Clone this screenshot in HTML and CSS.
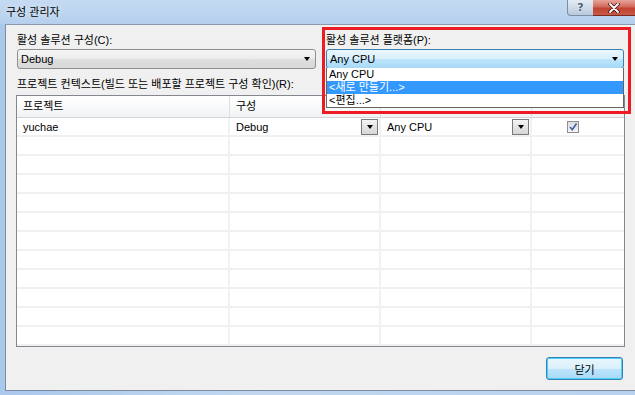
FILE: index.html
```html
<!DOCTYPE html>
<html lang="ko">
<head>
<meta charset="utf-8">
<link rel="stylesheet" href="styles.css">
</head>
<body>
<div class="window">
  <div class="titlebar">
    <div class="title">구성 관리자</div>
    <div class="caption-btns">
      <div class="cbtn help">?</div>
      <div class="cbtn close">
        <svg width="16" height="10" viewBox="0 0 16 10"><path d="M4 1 L12 9 M12 1 L4 9" stroke="#3b1010" stroke-width="3.4" stroke-linecap="round"/><path d="M4 1 L12 9 M12 1 L4 9" stroke="#ffffff" stroke-width="1.8" stroke-linecap="round"/></svg>
      </div>
    </div>
  </div>
  <div class="client">
    <div class="fields">
      <div class="field">
        <div class="label">활성 솔루션 구성(C):</div>
        <div class="combo">
          <span>Debug</span>
          <span class="arrow"></span>
        </div>
      </div>
      <div class="field platform">
        <div class="label">활성 솔루션 플랫폼(P):</div>
        <div class="combo active">
          <span>Any CPU</span>
          <span class="arrow"></span>
        </div>
        <div class="droplist">
          <div class="item">Any CPU</div>
          <div class="item selected">&lt;새로 만들기...&gt;</div>
          <div class="item">&lt;편집...&gt;</div>
        </div>
        <div class="highlight"></div>
      </div>
    </div>
    <div class="label grid-label">프로젝트 컨텍스트(빌드 또는 배포할 프로젝트 구성 확인)(R):</div>
    <div class="grid">
      <div class="hcell">프로젝트</div>
      <div class="hcell">구성</div>
      <div class="hcell"></div>
      <div class="hcell"></div>

      <div class="cell">yuchae</div>
      <div class="cell drop"><span>Debug</span><span class="cellbtn"><span class="arrow"></span></span></div>
      <div class="cell drop"><span>Any CPU</span><span class="cellbtn"><span class="arrow"></span></span></div>
      <div class="cell center"><span class="check"><svg width="10" height="10" viewBox="0 0 10 10"><path d="M2 5 L4.3 7.6 L8.5 1.5" stroke="#3f5ea8" stroke-width="1.6" fill="none"/></svg></span></div>

      <div class="cell"></div><div class="cell"></div><div class="cell"></div><div class="cell"></div>
      <div class="cell"></div><div class="cell"></div><div class="cell"></div><div class="cell"></div>
      <div class="cell"></div><div class="cell"></div><div class="cell"></div><div class="cell"></div>
      <div class="cell"></div><div class="cell"></div><div class="cell"></div><div class="cell"></div>
      <div class="cell"></div><div class="cell"></div><div class="cell"></div><div class="cell"></div>
      <div class="cell"></div><div class="cell"></div><div class="cell"></div><div class="cell"></div>
      <div class="cell"></div><div class="cell"></div><div class="cell"></div><div class="cell"></div>
      <div class="cell"></div><div class="cell"></div><div class="cell"></div><div class="cell"></div>
      <div class="cell"></div><div class="cell"></div><div class="cell"></div><div class="cell"></div>
      <div class="cell"></div><div class="cell"></div><div class="cell"></div><div class="cell"></div>
      <div class="cell"></div><div class="cell"></div><div class="cell"></div><div class="cell"></div>
    </div>
    <div class="footer">
      <button class="btn">닫기</button>
    </div>
  </div>
</div>
</body>
</html>
```

FILE: styles.css
```css
* { box-sizing: border-box; }
html, body { margin: 0; padding: 0; }
body {
  width: 635px;
  height: 395px;
  overflow: hidden;
  font-family: "Liberation Sans", "Noto Sans CJK KR", sans-serif;
  font-size: 11px;
  color: #000;
}
.window {
  width: 635px;
  height: 395px;
  background: linear-gradient(90deg, #a9c8ec 0%, #c2d8f0 40%, #b8d1ee 100%);
  display: flex;
  flex-direction: column;
}
.titlebar {
  height: 24px;
  flex: none;
  position: relative;
  background: linear-gradient(180deg, #c5dbf2 0%, #bcd4ef 60%, #b5cfec 100%);
}
.title {
  position: absolute;
  left: 6px;
  top: 5px;
  line-height: 14px;
  font-size: 11px;
  color: #000;
  text-shadow: 0 0 6px rgba(255,255,255,0.9);
}
.caption-btns {
  position: absolute;
  right: 0;
  top: 0;
  display: flex;
}
.cbtn {
  height: 16px;
  display: flex;
  align-items: center;
  justify-content: center;
}
.help {
  width: 26px;
  border: 1px solid #7c8ea6;
  border-top: none;
  border-right: none;
  border-bottom-left-radius: 4px;
  background: linear-gradient(180deg, #e3ebf4 0%, #cfdbe9 50%, #b9c9dc 100%);
  color: #4d5d72;
  font-family: "DejaVu Sans", sans-serif;
  font-weight: bold;
  font-size: 11px;
  text-shadow: 0 0 2px #fff;
}
.close {
  width: 42px;
  border-bottom: 1px solid #7a2a22;
  background: linear-gradient(180deg, #e7a49a 0%, #d26a5b 45%, #c2412f 55%, #c75a48 100%);
}
.client {
  flex: 1;
  margin-left: 5px;
  margin-bottom: 4px;
  background: #f0f0f0;
  border-left: 1px solid #7d8ba0;
  border-top: 1px solid #8a99ad;
  border-bottom: 1px solid #7d8ba0;
  padding: 8px 0 0 11px;
  display: flex;
  flex-direction: column;
}
.fields {
  display: flex;
  gap: 10px;
}
.field {
  display: flex;
  flex-direction: column;
}
.field:first-child { width: 299px; }
.platform { width: 298px; position: relative; }
.label {
  line-height: 14px;
  height: 15px;
  white-space: nowrap;
}
.combo {
  margin-top: 1px;
  height: 20px;
  border: 1px solid #8e8f8f;
  border-radius: 3px;
  background: linear-gradient(180deg, #f6f6f6 0%, #ebebeb 50%, #dedede 51%, #d8d8d8 100%);
  display: flex;
  align-items: center;
  justify-content: space-between;
  padding: 0 5px 0 3px;
  line-height: 14px;
}
.combo.active {
  border-color: #3c7fb1;
  background: linear-gradient(180deg, #eaf6fd 0%, #d9f0fc 50%, #bee6fd 51%, #a7d9f5 100%);
}
.arrow {
  width: 0;
  height: 0;
  border-left: 3.5px solid transparent;
  border-right: 3.5px solid transparent;
  border-top: 4px solid #000;
}
.droplist {
  position: absolute;
  left: 0;
  top: 35px;
  width: 298px;
  background: #fff;
  border: 1px solid #646464;
  border-top: none;
  padding: 0;
}
.item {
  height: 13px;
  line-height: 13px;
  padding-left: 2px;
  white-space: nowrap;
}
.item.selected {
  background: #3399ff;
  color: #fff;
}
.highlight {
  position: absolute;
  left: -4px;
  top: -6px;
  width: 309px;
  height: 87px;
  border: 3px solid #ed1c24;
  pointer-events: none;
}
.grid-label {
  margin-top: 8px;
}
.grid {
  margin-top: 3px;
  margin-left: -1px;
  width: 609px;
  height: 252px;
  border: 1px solid #828790;
  background: #fff;
  display: grid;
  grid-template-columns: 213px 151px 151px 92px;
  grid-template-rows: 22px repeat(12, 19px);
  align-content: start;
}
.hcell {
  background: linear-gradient(180deg, #ffffff 0%, #f7f8f9 60%, #f1f2f4 100%);
  border-right: 1px solid #dcdfe3;
  border-bottom: 1px solid #d5d5d5;
  padding-left: 6px;
  line-height: 21px;
  white-space: nowrap;
}
.hcell:nth-child(4) { border-right: none; }
.cell {
  border-right: 2px solid #eef2f7;
  border-bottom: 2px solid #f0f0f0;
  padding-left: 6px;
  display: flex;
  align-items: center;
  justify-content: space-between;
  white-space: nowrap;
}
.cell:nth-child(4n) { border-right: none; }
.cell.drop { padding-right: 1px; }
.cell.center { justify-content: center; padding-left: 0; padding-right: 10px; }
.cellbtn {
  width: 17px;
  height: 16px;
  border: 1px solid #7a7a7a;
  background: linear-gradient(180deg, #f4f4f4 0%, #e4e4e4 50%, #d6d6d6 100%);
  display: flex;
  align-items: center;
  justify-content: center;
  margin-top: 1px;
}
.check {
  width: 12px;
  height: 12px;
  border: 1px solid #8f8f8f;
  background: linear-gradient(180deg, #dcdcdc, #f4f4f4);
  display: flex;
  align-items: center;
  justify-content: center;
}
.footer {
  display: flex;
  justify-content: flex-end;
  padding-right: 12px;
  margin-top: 10px;
}
.btn {
  width: 77px;
  height: 23px;
  border: 1px solid #3c7fb1;
  border-radius: 3px;
  background: linear-gradient(180deg, #eaf6fd 0%, #d9f0fc 50%, #bee6fd 51%, #a7d9f5 100%);
  box-shadow: inset 0 0 0 1px #48d0f8;
  font-family: "Liberation Sans", "Noto Sans CJK KR", sans-serif;
  font-size: 11px;
  color: #000;
  padding: 0;
}
```
